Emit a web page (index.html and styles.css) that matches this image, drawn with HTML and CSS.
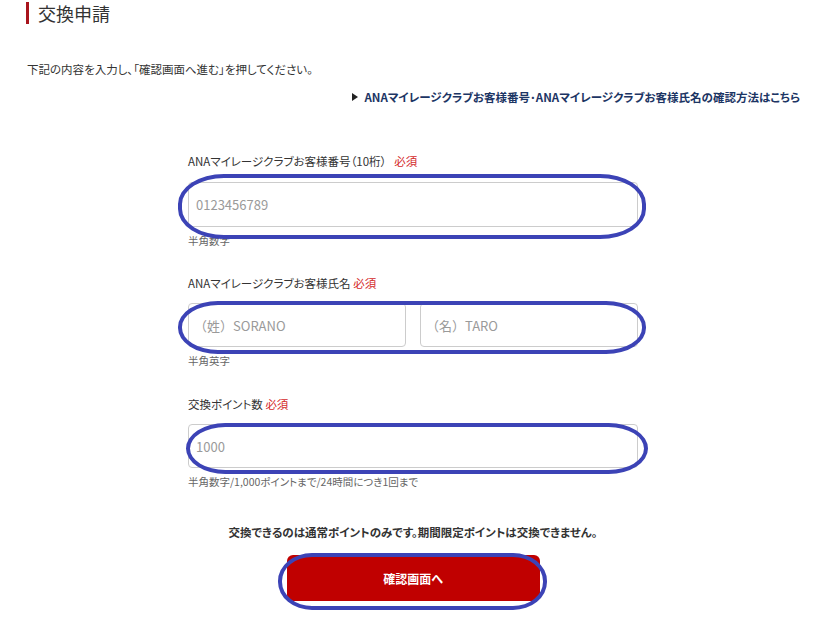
FILE: index.html
```html
<!DOCTYPE html>
<html lang="ja">
<head>
<meta charset="utf-8">
<title>交換申請</title>
<link rel="stylesheet" href="styles.css">
</head>
<body>
<div class="page">
  <h1 class="title">交換申請</h1>
  <p class="lead">下記の内容を入力し、「確認画面へ進む」を押してください。</p>
  <div class="linkrow"><a class="guide" href="#"><span class="tri"></span>ANAマイレージクラブお客様番号･ANAマイレージクラブお客様氏名の確認方法はこちら</a></div>

  <form class="form">
    <div class="field f1">
      <div class="label">ANAマイレージクラブお客様番号（10桁）<span class="req req-gap">必須</span></div>
      <input class="input tall" type="text" placeholder="0123456789">
      <div class="help">半角数字</div>
    </div>
    <div class="field f2">
      <div class="label">ANAマイレージクラブお客様氏名 <span class="req">必須</span></div>
      <div class="pair">
        <input class="input" type="text" placeholder="（姓）SORANO">
        <input class="input" type="text" placeholder="（名）TARO">
      </div>
      <div class="help">半角英字</div>
    </div>
    <div class="field f3">
      <div class="label">交換ポイント数 <span class="req">必須</span></div>
      <input class="input" type="text" placeholder="1000">
      <div class="help">半角数字/1,000ポイントまで/24時間につき1回まで</div>
    </div>
    <p class="notice">交換できるのは通常ポイントのみです。期間限定ポイントは交換できません。</p>
    <div class="btnrow"><button class="submit" type="button">確認画面へ</button></div>
  </form>

  <div class="mark m1"></div>
  <div class="mark m2"></div>
  <div class="mark m3"></div>
  <div class="mark m4"></div>
</div>
</body>
</html>
```
FILE: styles.css
```css
* { box-sizing: border-box; }
html, body { margin: 0; padding: 0; background: #fff; }
body {
  font-family: "Noto Sans CJK JP", "Noto Sans", "Liberation Sans", sans-serif;
  font-feature-settings: "palt";
  color: #333;
  width: 830px;
  height: 618px;
  overflow: hidden;
}
.page { position: relative; height: 618px; }

.title {
  margin: 2px 0 0 26px;
  padding-left: 9px;
  border-left: 3px solid #a8141c;
  font-size: 18px;
  line-height: 22px;
  font-weight: 400;
  color: #333;
}
.lead {
  margin: 37px 0 0 27px;
  font-size: 11.5px;
  line-height: 16px;
  color: #333;
}
.linkrow {
  margin-top: 12px;
  padding-right: 30px;
  display: flex;
  justify-content: flex-end;
}
.guide {
  font-size: 11.5px;
  line-height: 16px;
  font-weight: 700;
  color: #1c3564;
  text-decoration: none;
  display: flex;
  align-items: center;
}
.tri {
  width: 0; height: 0;
  border-left: 6px solid #222;
  border-top: 4px solid transparent;
  border-bottom: 4px solid transparent;
  margin-right: 6px;
}

.form {
  margin: 48px 0 0 188px;
  width: 450px;
}
.field { display: flex; flex-direction: column; }
.f2 { margin-top: 26px; }
.f3 { margin-top: 27px; }
.label {
  font-size: 11.5px;
  line-height: 16px;
  color: #333;
  margin-bottom: 13px;
}
.f2 .label, .f3 .label { margin-bottom: 12px; }
.req { color: #d42a2a; }
.req-gap { margin-left: 8px; }
.input {
  width: 100%;
  height: 44px;
  border: 1px solid #ccc;
  border-radius: 4px;
  padding: 0 7px;
  font-family: inherit;
  font-feature-settings: normal;
  font-size: 13px;
  color: #333;
  background: #fff;
  outline: none;
}
.input.tall { height: 45px; }
.input::placeholder { color: #9a9a9a; }
.pair { display: flex; gap: 14px; }
.pair .input { flex: 1; width: auto; padding-left: 5px; }
.help {
  margin-top: 6px;
  font-size: 10.5px;
  line-height: 16px;
  color: #666;
}
.notice {
  margin: 34px -100px 0;
  text-align: center;
  font-size: 11.5px;
  line-height: 16px;
  font-weight: 700;
  color: #333;
}
.btnrow { display: flex; justify-content: center; margin-top: 15px; }
.submit {
  width: 253px;
  height: 46px;
  background: #c00000;
  color: #fff;
  border: none;
  border-radius: 6px;
  font-family: inherit;
  font-feature-settings: "palt";
  font-size: 12px;
  font-weight: 700;
}

.mark {
  position: absolute;
  border: 4px solid #3c43b6;
  border-radius: 40px / 26px;
  pointer-events: none;
}
.m1 { left: 178px; top: 172px; width: 468px; height: 65px; border-radius: 46px / 30px; }
.m2 { left: 178px; top: 299px; width: 468px; height: 53px; }
.m3 { left: 186px; top: 421px; width: 462px; height: 51px; }
.m4 { left: 278px; top: 551px; width: 269px; height: 57px; border-radius: 34px / 28px; }
```
